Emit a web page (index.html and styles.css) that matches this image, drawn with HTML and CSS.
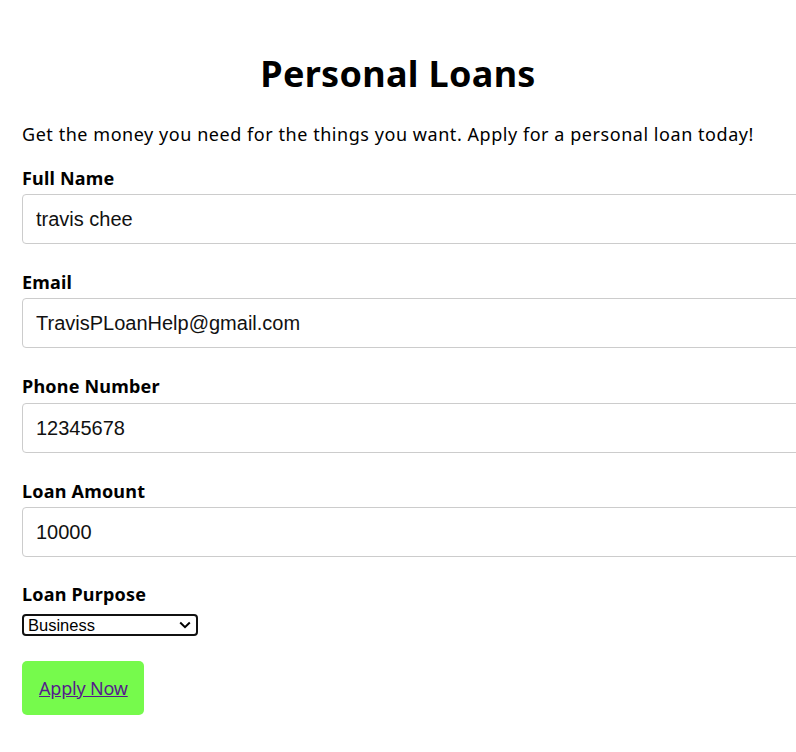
FILE: index.html
```html
<!DOCTYPE html>
<html>
<head>
<meta charset="utf-8">
<link rel="stylesheet" href="styles.css">
</head>
<body>
<main class="page">
  <h1 class="title">Personal Loans</h1>
  <p class="intro">Get the money you need for the things you want. Apply for a personal loan today!</p>
  <form class="form">
    <div class="field">
      <label class="label">Full Name</label>
      <input class="input" type="text" value="travis chee">
    </div>
    <div class="field">
      <label class="label">Email</label>
      <input class="input" type="text" value="TravisPLoanHelp@gmail.com">
    </div>
    <div class="field field-phone">
      <label class="label">Phone Number</label>
      <input class="input" type="text" value="12345678">
    </div>
    <div class="field">
      <label class="label">Loan Amount</label>
      <input class="input" type="text" value="10000">
    </div>
    <div class="field field-purpose">
      <label class="label">Loan Purpose</label>
      <select class="select"><option>Business</option></select>
    </div>
    <div class="actions">
      <span class="button"><a class="button-link" href="#">Apply Now</a></span>
    </div>
  </form>
</main>
</body>
</html>
```
FILE: styles.css
```css
html, body {
  margin: 0;
  padding: 0;
  background: #fff;
  overflow: hidden;
}
.page {
  padding: 0 22px;
  font-family: "Noto Sans", "DejaVu Sans", sans-serif;
  color: #000;
}
.title {
  margin: 0;
  padding-top: 50px;
  font-size: 36px;
  line-height: 48px;
  font-weight: bold;
  text-align: center;
  letter-spacing: 0.3px;
}
.intro {
  margin: 24px 0 12px;
  font-size: 18px;
  line-height: 24px;
  letter-spacing: 0.55px;
}
.form {
  display: flex;
  flex-direction: column;
}
.field {
  display: flex;
  flex-direction: column;
  margin-top: 8px;
  margin-bottom: 18px;
}
.label {
  font-size: 18px;
  font-weight: bold;
  line-height: 24px;
  letter-spacing: 0.2px;
  margin-bottom: 4px;
}
.field-phone .label {
  margin-bottom: 5px;
}
.field-purpose {
  margin-top: 7px;
}
.input {
  width: 100%;
  box-sizing: content-box;
  padding: 12px 13px;
  height: 24px;
  font-family: "Liberation Sans", Arial, sans-serif;
  font-size: 20px;
  color: #111;
  border: 1px solid #ccc;
  border-radius: 4px;
  margin: 0;
}
.select {
  -webkit-appearance: none;
  appearance: none;
  width: 176px;
  height: 22px;
  box-sizing: border-box;
  font-family: "Liberation Sans", Arial, sans-serif;
  font-size: 16.5px;
  line-height: 18px;
  border: 2px solid #111;
  border-radius: 4px;
  padding: 0 0 0 4px;
  margin: 4px 0 0;
  color: #000;
  background: #fff url("data:image/svg+xml;utf8,<svg xmlns='http://www.w3.org/2000/svg' width='12' height='8' viewBox='0 0 12 8'><path d='M1.2 1.5 L6 6.2 L10.8 1.5' fill='none' stroke='black' stroke-width='2'/></svg>") no-repeat right 5px center;
}
.actions {
  display: flex;
  margin-top: 7px;
}
.button {
  display: inline-block;
  background: #76fa4c;
  border-radius: 5px;
  padding: 15px 16px 15px 17px;
  font-size: 18px;
  line-height: 24px;
  letter-spacing: -0.2px;
}
.button-link {
  color: #551a8b;
  text-decoration: underline;
}
```
